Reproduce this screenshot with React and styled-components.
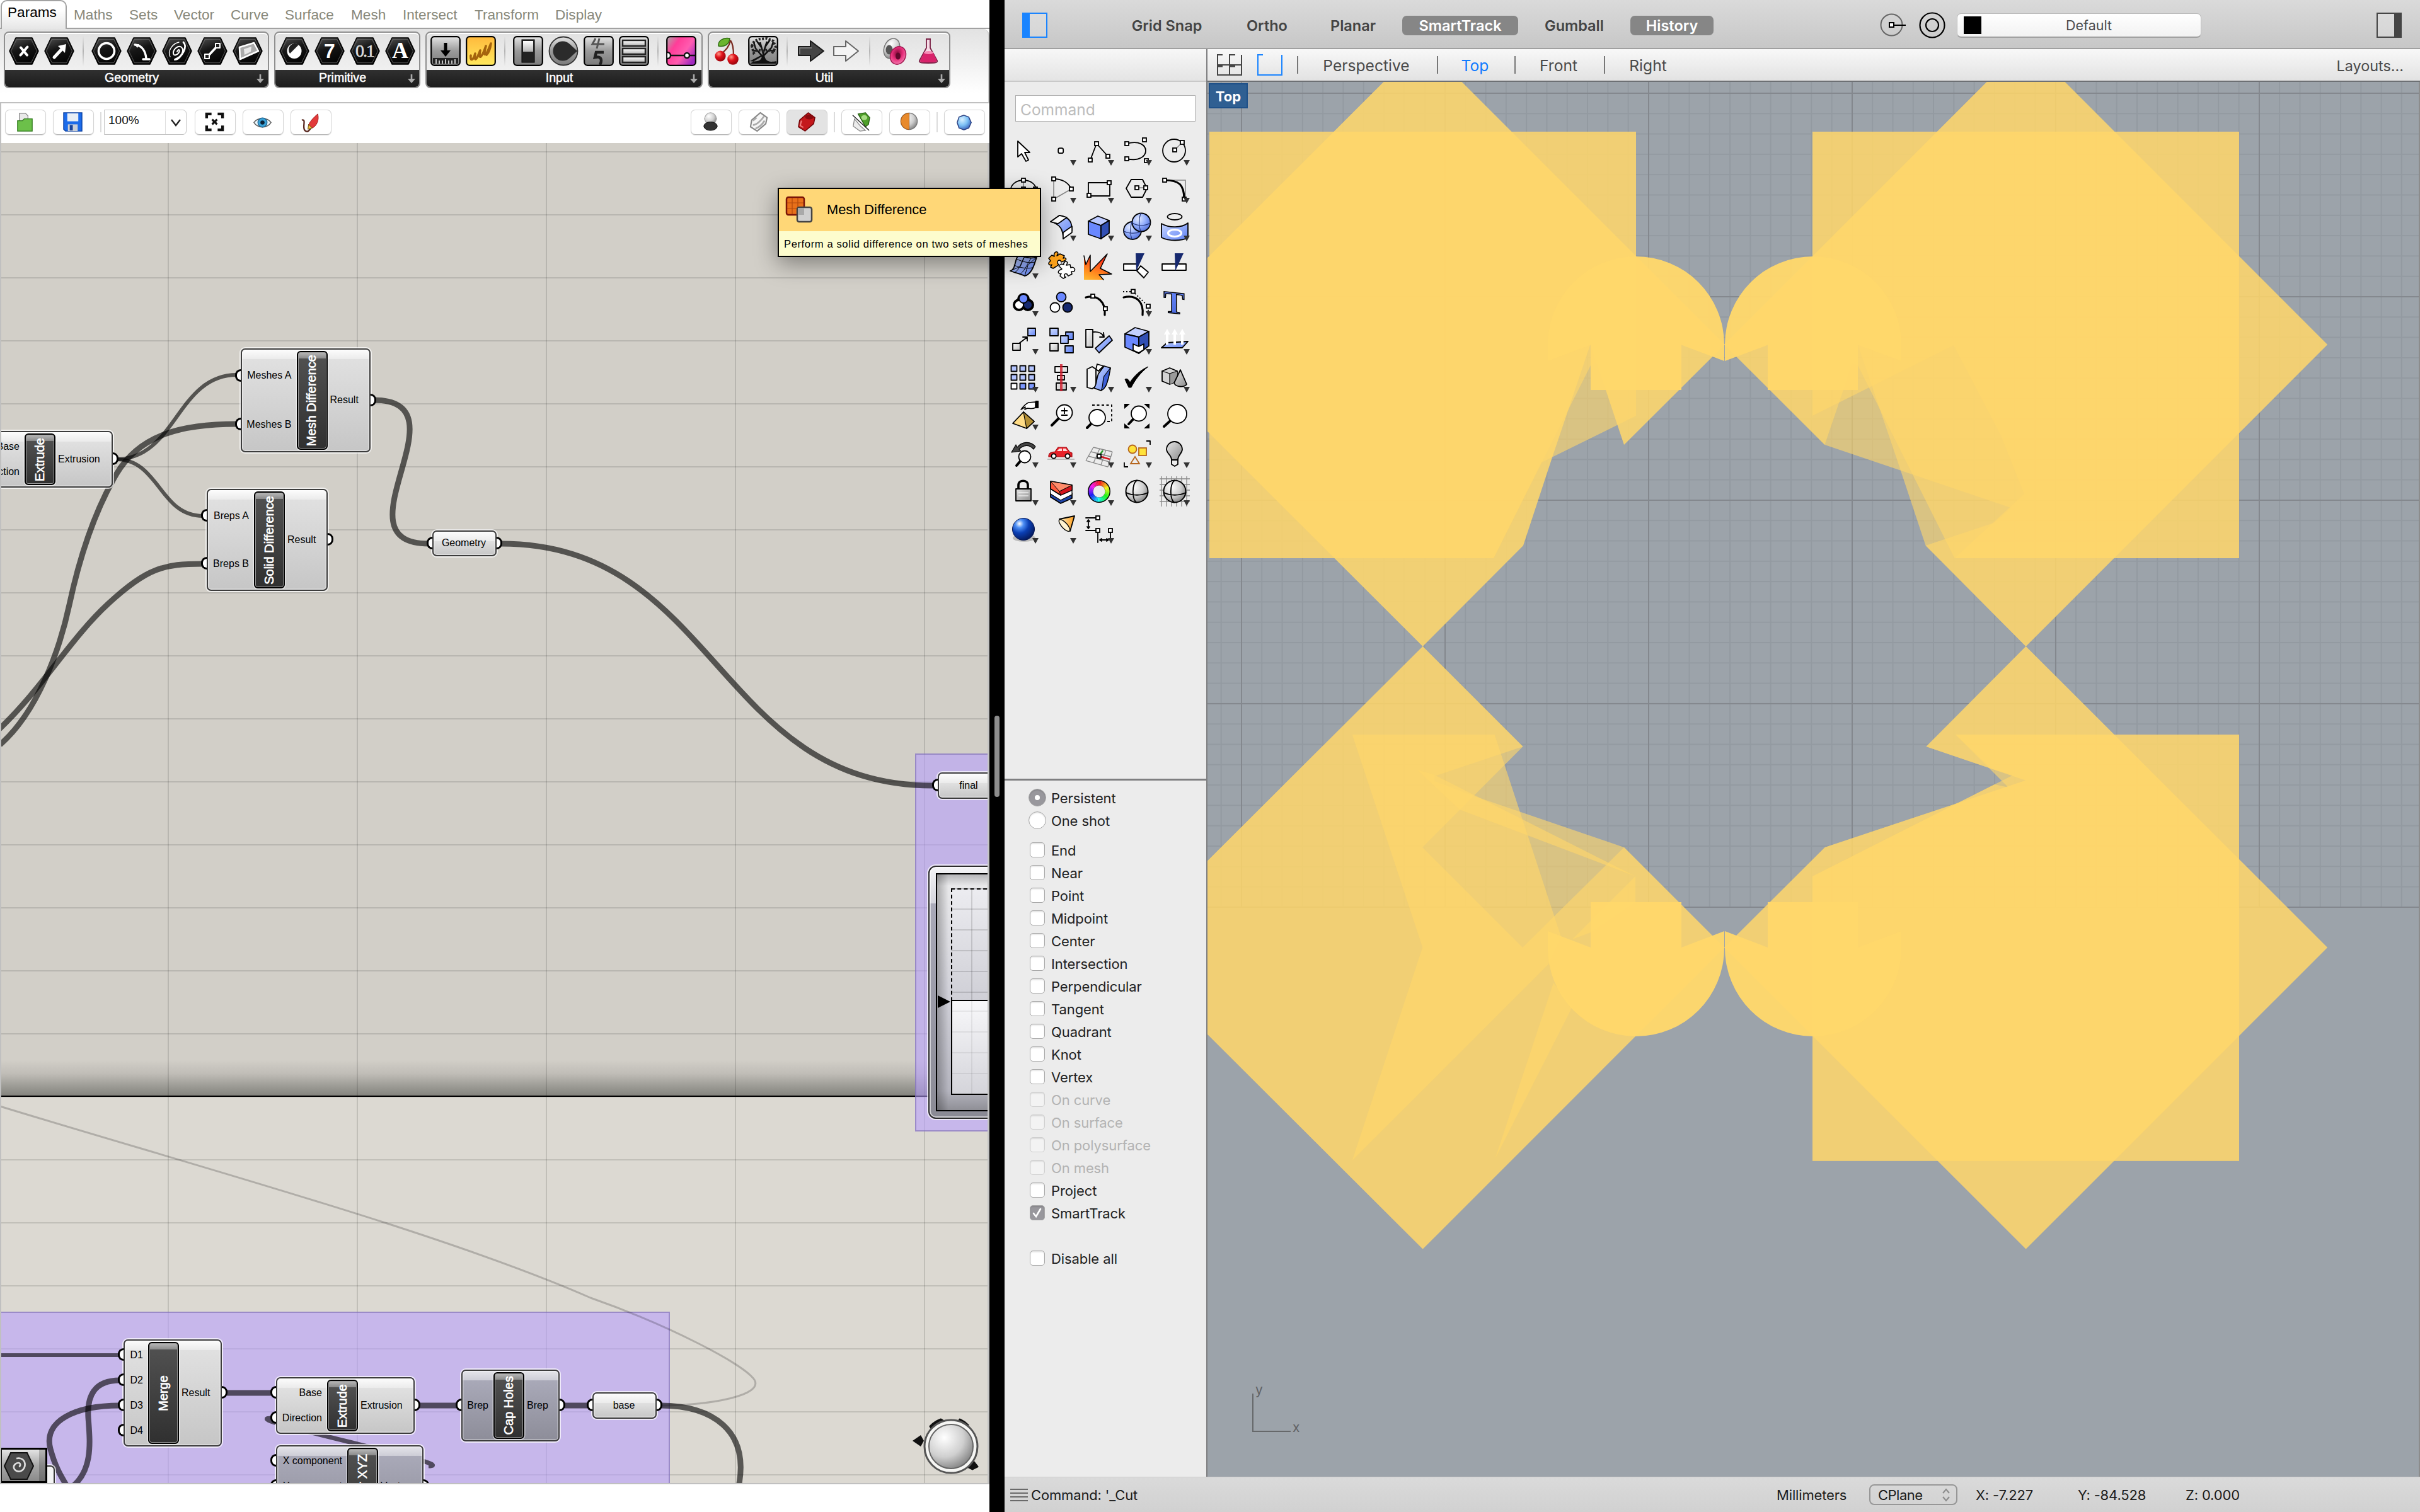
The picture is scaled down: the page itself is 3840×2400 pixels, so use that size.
import React from "react";
import styled, { createGlobalStyle, css } from "styled-components";

const Global = createGlobalStyle`
  html, body { margin: 0; padding: 0; background: #000; }
  *, *::before, *::after { box-sizing: border-box; }
`;

const arial = `"Liberation Sans", Arial, sans-serif`;
const inter = `Inter, Roboto, sans-serif`;

const Screen = styled.div`
  position: relative;
  display: flex;
  width: 3840px;
  height: 2400px;
  overflow: hidden;
  background: #000;
`;

/* ---------- shared gradients ---------- */

const HiddenSvg = styled.svg`
  position: absolute;
  width: 0;
  height: 0;
`;

const Lin = ({ id, stops, x2 = 0, y2 = 1 }) => (
  <linearGradient id={id} x1="0" y1="0" x2={x2} y2={y2}>
    {stops.map((c, i) => (
      <stop key={i} offset={i / (stops.length - 1)} stopColor={c} />
    ))}
  </linearGradient>
);

const Defs = () => (
  <HiddenSvg>
    <defs>
      <Lin id="hex" stops={["#555", "#161616", "#050505"]} x2={0.4} />
      <Lin id="box" stops={["#e4e4e4", "#9a9a9a", "#7c7c7c"]} />
      <Lin id="boxLight" stops={["#ffffff", "#b4b4b4"]} />
      <Lin id="gold" stops={["#ffb93c", "#ffe95e"]} />
      <Lin id="pink" stops={["#a9a9a9", "#ff3d98", "#ff5cb0", "#a02bc0"]} x2={1} y2={0.7} />
      <Lin id="blue" stops={["#c7d6ff", "#5f82f5"]} x2={1} y2={1} />
      <Lin id="blueDark" stops={["#6c8cff", "#4564d8"]} />
      <Lin id="grey" stops={["#ffffff", "#bdbdbd"]} x2={1} />
      <Lin id="greyDark" stops={["#e6e6e6", "#8c8c8c"]} x2={1} />
      <Lin id="fire" stops={["#ff3a1a", "#ff8a1f", "#ffce3a"]} x2={-0.4} />
      <Lin id="orange" stops={["#fff3c8", "#ff9d1a"]} x2={1} y2={0} />
      <radialGradient id="ball" cx=".35" cy=".3" r=".8">
        <stop offset="0" stopColor="#fff" />
        <stop offset=".55" stopColor="#cfcfcf" />
        <stop offset="1" stopColor="#777" />
      </radialGradient>
      <radialGradient id="ballBlue" cx=".35" cy=".3" r=".8">
        <stop offset="0" stopColor="#e3ebff" />
        <stop offset=".5" stopColor="#93aefc" />
        <stop offset="1" stopColor="#4a68d8" />
      </radialGradient>
      <radialGradient id="render" cx=".32" cy=".25" r=".85">
        <stop offset="0" stopColor="#fff" />
        <stop offset=".22" stopColor="#4d8ff5" />
        <stop offset=".5" stopColor="#0b3fb4" />
        <stop offset="1" stopColor="#04134d" />
      </radialGradient>
      <radialGradient id="cherry" cx=".35" cy=".3" r=".8">
        <stop offset="0" stopColor="#ff9a8a" />
        <stop offset=".4" stopColor="#e0141c" />
        <stop offset="1" stopColor="#8a0008" />
      </radialGradient>
      <radialGradient id="pinkBall" cx=".4" cy=".4" r=".7">
        <stop offset="0" stopColor="#8c0a3c" />
        <stop offset=".5" stopColor="#e8307c" />
        <stop offset="1" stopColor="#f58ab8" />
      </radialGradient>
      <radialGradient id="sky" cx=".35" cy=".3" r=".8">
        <stop offset="0" stopColor="#d8f0ff" />
        <stop offset=".5" stopColor="#7cc0f5" />
        <stop offset="1" stopColor="#2c4fae" />
      </radialGradient>
    </defs>
  </HiddenSvg>
);

/* ---------- left window: ribbon ---------- */

const ScriptWindow = styled.section`
  display: flex;
  flex-direction: column;
  width: 1570px;
  height: 2400px;
  background: #fff;
  font-family: ${arial};
  overflow: hidden;
`;

const TabRow = styled.nav`
  display: flex;
  align-items: flex-end;
  height: 46px;
  padding-left: 1px;
  border-bottom: 2px solid #a2a2a2;
`;

const Tab = styled.div`
  width: ${(p) => p.$w}px;
  height: 44px;
  padding-top: 10px;
  font-size: 22.6px;
  line-height: 28px;
  white-space: nowrap;
  color: #88887a;
  ${(p) =>
    p.$active &&
    css`
      height: 46px;
      margin: 0 11px -2px 0;
      padding: 4px 0 0 9px;
      color: #000;
      background: linear-gradient(#fff 30%, #e6e6e6);
      border: 2px solid #a2a2a2;
      border-bottom: none;
      border-radius: 10px 10px 0 0;
    `}
`;

const Ribbon = styled.div`
  display: flex;
  gap: 8px;
  height: 118px;
  padding: 4px 0 0 6px;
  background: linear-gradient(#e2e2e2, #fff 88%);
  border-right: 2px solid #cfcfcf;
  border-bottom: 2px solid #c0c0c0;
  border-top-right-radius: 10px;
`;

const Group = styled.div`
  display: flex;
  flex-direction: column;
  width: ${(p) => p.$w}px;
  height: 90px;
  border: 2px solid #8f8f8f;
  border-radius: 8px;
  overflow: hidden;
  background: linear-gradient(#e2e2e2, #f6f6f6);
  box-shadow: inset 0 2px 0 #fff;
`;

const GroupIcons = styled.div`
  display: flex;
  flex: 1;
  align-items: center;
  gap: 8px;
  padding: 0 0 1px 6px;
`;

const GroupLabel = styled.div`
  display: flex;
  align-items: center;
  height: 27px;
  padding-bottom: 3px;
  background: linear-gradient(#303030, #1c1c1c);
  color: #fff;
  font-size: 19.6px;
  line-height: 24px;
  -webkit-text-stroke: 0.5px #fff;
  span { flex: 1; text-align: center; padding-left: 4px; }
`;

const RibbonIcon = styled.svg`
  width: 48px;
  height: 48px;
  flex: none;
`;

const RibbonSep = styled.div`
  width: 11px;
  height: 48px;
  flex: none;
  background: linear-gradient(#0000, #b4b4b4 50%, #0000) center / 2px 100% no-repeat;
`;

const More = styled.svg`
  width: 14px;
  height: 16px;
  margin: 3px 5px 0 0;
`;

const Hex = ({ children }) => (
  <RibbonIcon viewBox="0 0 48 48">
    <path d="M1 24 11 3H37L47 24 37 45H11Z" fill="url(#hex)" stroke="#000" strokeWidth="1.5" strokeLinejoin="round" />
    <path d="M3.5 24 12.5 5.3H35.5L44.5 24 35.5 42.7H12.5Z" fill="none" stroke="#777" strokeWidth="1" opacity=".7" />
    {children}
  </RibbonIcon>
);

const Boxed = ({ fill = "url(#box)", children }) => (
  <RibbonIcon viewBox="0 0 48 48">
    <rect x="1.2" y="1.2" width="45.6" height="45.6" rx="5" fill={fill} stroke="#000" strokeWidth="2.2" />
    {children}
  </RibbonIcon>
);

const wl = { fill: "none", stroke: "#fff", strokeLinecap: "round", strokeLinejoin: "round" };

const geometryIcons = [
  <Hex key="pt"><path d="M19 18.500 29 30.500M29.500 17.500 18.500 30.500" {...wl} strokeWidth="4" /></Hex>,
  <Hex key="vec"><path d="M16 34 29 20" {...wl} strokeWidth="5" /><path d="M22 16 35 13 33 27Z" fill="#fff" /></Hex>,
  null,
  <Hex key="circ"><circle cx="24" cy="24" r="12.5" {...wl} strokeWidth="3.6" /></Hex>,
  <Hex key="arc"><path d="M13 14C25 15 30 25 31 36M26 37H36" {...wl} strokeWidth="3.4" /><path d="M12 13 20 13 17 19Z" fill="#fff" /></Hex>,
  <Hex key="spi"><path d="M24 25c2-5 5-3 3 1s-9 7-9 1 8-13 13-9-1 20-11 20" {...wl} strokeWidth="2" /><path d="M34 10c7 7-2 24-13 27" {...wl} strokeWidth="2.8" /><path d="M13 33C8 24 17 12 27 10" {...wl} strokeWidth="1.4" /></Hex>,
  <Hex key="line"><path d="M17 32 31 17" {...wl} strokeWidth="3.6" /><rect x="12" y="29" width="7" height="7" {...wl} fill="#222" strokeWidth="2" /><rect x="29" y="12" width="7" height="7" {...wl} fill="#222" strokeWidth="2" /></Hex>,
  <Hex key="srf"><path d="M11 18 34 11 41 24 12 37Z" fill="#aaa" stroke="#fff" strokeWidth="2.6" strokeLinejoin="round" /><path d="M18 21 30 17 29 25 19 30Z" fill="#e8e8e8" /></Hex>,
];

const primitiveIcons = [
  <Hex key="bool"><ellipse cx="24" cy="24" rx="11.500" ry="12" fill="#fff" /><path d="M17 28A10 10 0 0 1 31 14Z" fill="#222" /></Hex>,
  <Hex key="int"><text x="24" y="35" fontSize="32" fontFamily="Liberation Sans" fill="#fff" textAnchor="middle" fontWeight="700">7</text></Hex>,
  <Hex key="num"><text x="23.500" y="33" fontSize="28" fontFamily="Liberation Serif" fill="#ddd" textAnchor="middle" letterSpacing="-2" stroke="#ddd" strokeWidth=".6">0.1</text></Hex>,
  <Hex key="txt"><text x="24" y="34.5" fontSize="36" fontFamily="Liberation Serif" fill="#fff" textAnchor="middle" fontWeight="700">A</text></Hex>,
];

const inputIcons = [
  <Boxed key="dl"><path d="M24 11V26" stroke="#000" strokeWidth="5" /><path d="M16 23H32L24 33Z" fill="#000" /><rect x="4" y="35" width="40" height="9" fill="#222" /><path d="M9 37v7M14 39v5M19 39v5M24 37v7M29 39v5M34 39v5M39 37v7" stroke="#eee" strokeWidth="1.6" /></Boxed>,
  <Boxed key="gm" fill="url(#gold)"><path d="M8 31C7 41 12 39 15 28C13 42 17 39 23 23C20 39 25 36 32 16C27 34 31 35 40 12C38 26 34 29 33 30" fill="none" stroke="#a5630d" strokeWidth="3.6" strokeLinecap="round" strokeLinejoin="round" /></Boxed>,
  null,
  <Boxed key="sl"><rect x="14" y="6" width="20" height="36" fill="#222" stroke="#000" /><rect x="16" y="8" width="16" height="17" fill="url(#boxLight)" /></Boxed>,
  <RibbonIcon key="kn" viewBox="0 0 48 48"><circle cx="24" cy="24" r="22.5" fill="url(#box)" stroke="#333" strokeWidth="1.8" /><circle cx="23" cy="24" r="15.5" fill="#2b2b2b" /><path d="M34 13 46 24 34 35Z" fill="#2b2b2b" /></RibbonIcon>,
  <Boxed key="ds"><path d="M19 4 14 13H33M25 4 21 20" fill="none" stroke="#555" strokeWidth="3" /><path d="M32 26H20L18 34C26 32 31 36 26 46" fill="none" stroke="#222" strokeWidth="4.5" /></Boxed>,
  <Boxed key="vl">{[7, 20, 33].map((y) => <rect key={y} x="6" y={y} width="36" height="9" fill="url(#boxLight)" stroke="#222" strokeWidth="2.4" />)}</Boxed>,
  null,
  <Boxed key="pk" fill="url(#pink)"><path d="M2 31H46" stroke="#111" strokeWidth="2.4" /><circle cx="33" cy="31" r="4" fill="#fff" stroke="#111" strokeWidth="2.4" /><path d="M2 26a5 5 0 0 1 0 10" fill="#fff" stroke="#111" strokeWidth="2.4" /></Boxed>,
];

const utilIcons = [
  <RibbonIcon key="ch" viewBox="0 0 48 48"><path d="M28 7C26 18 20 24 12 29M28 7C33 14 33 24 33 31" fill="none" stroke="#7a2a20" strokeWidth="2.2" /><path d="M9 16C8 8 16 2 27 4C26 14 18 18 9 16Z" fill="#6ab52e" stroke="#2f6d12" strokeWidth="1.5" /><circle cx="12" cy="32" r="8.6" fill="url(#cherry)" /><circle cx="32" cy="37" r="8.8" fill="url(#cherry)" /></RibbonIcon>,
  <Boxed key="tr" fill="url(#box)"><path d="M3 44H45V40C30 43 27 38 26 30M22 30C22 38 18 42 3 40Z" fill="#111" /><path d="M24 44V27M24 34 12 20M24 32 37 19M24 28 19 10M24 28 30 9M15 24 6 23M33 23 43 24M12 20 9 10M37 19 40 9M21 18 13 7M28 16 35 6" stroke="#111" strokeWidth="2.6" fill="none" /><path d="M6 16 10 8 19 5 30 4 40 8 44 18 39 26 32 22 24 24 15 22 9 27Z" fill="none" stroke="#222" strokeWidth="4" strokeDasharray="3 2.4" /></Boxed>,
  null,
  <RibbonIcon key="a1" viewBox="0 0 48 48"><path d="M5 17H24V8L45 24 24 40V31H5Z" fill="#444" stroke="#1a1a1a" strokeWidth="2" strokeLinejoin="round" /><path d="M7 29V19H26" fill="none" stroke="#888" strokeWidth="1.4" /></RibbonIcon>,
  <RibbonIcon key="a2" viewBox="0 0 48 48"><path d="M5 17H24V8L44 24 24 40V31H5Z" fill="#f4f4f4" stroke="#666" strokeWidth="2" strokeLinejoin="round" /></RibbonIcon>,
  null,
  <RibbonIcon key="eg" viewBox="0 0 48 48"><ellipse cx="22" cy="20" rx="12" ry="16.500" transform="rotate(22 22 20)" fill="url(#ball)" stroke="#777" strokeWidth="1.5" /><ellipse cx="18" cy="22" rx="5.500" ry="7.500" fill="#555" /><ellipse cx="32" cy="31" rx="12" ry="14.500" transform="rotate(25 32 31)" fill="url(#pinkBall)" stroke="#a01850" strokeWidth="1.5" /><ellipse cx="32" cy="32" rx="4" ry="5.500" fill="#60082c" /></RibbonIcon>,
  <RibbonIcon key="fl" viewBox="0 0 48 48"><path d="M20 5H28M21 5V19L10 39C9 42 11 43 24 43S39 42 38 39L27 19V5" fill="#f6dbe6" stroke="#7a2146" strokeWidth="1.8" /><path d="M17 27H32L37.5 39C37 42 34 42 24 42S10 42 11 39Z" fill="#d8236b" /><ellipse cx="24.5" cy="26.5" rx="7.5" ry="2.4" fill="#f58bb5" /></RibbonIcon>,
];

const RibbonGroup = ({ w, label, icons }) => (
  <Group $w={w}>
    <GroupIcons>{icons.map((ic, i) => ic || <RibbonSep key={i} />)}</GroupIcons>
    <GroupLabel>
      <span>{label}</span>
      <More viewBox="0 0 14 16"><path d="M7 1V10" stroke="#aaa" strokeWidth="2.6" /><path d="M1 8H13L7 15Z" fill="#aaa" /></More>
    </GroupLabel>
  </Group>
);

/* ---------- left window: canvas toolbar ---------- */

const ToolRow = styled.div`
  display: flex;
  align-items: center;
  height: 63px;
  padding: 0 7px 3px 6px;
  background: #fff;
  border-left: 2px solid #c0c0c0;
`;

const ToolButton = styled.button`
  display: flex;
  align-items: center;
  justify-content: center;
  width: 65px;
  height: 40px;
  flex: none;
  margin: 0 ${(p) => (p.$last ? 0 : 11)}px 0 0;
  padding: 0 2px 2px 0;
  border: 1.5px solid #d4d4d4;
  border-bottom-color: #b8b8b8;
  border-radius: 7px;
  box-shadow: 0 1px 1px #0002;
  background: ${(p) => (p.$on ? "#e3e3e3" : "#fff")};
  svg { width: 33px; height: 33px; }
`;

const ToolSep = styled.div`
  width: 2px;
  height: 32px;
  flex: none;
  margin: 0 ${(p) => p.$r}px 0 -1px;
  background: #dcdcdc;
`;

const Zoom = styled.div`
  display: flex;
  align-items: center;
  width: 131px;
  height: 40px;
  margin-right: 13px;
  border: 1.5px solid #c4c4c4;
  border-radius: 0 6px 6px 0;
  font-size: 19px;
  color: #111;
  span { width: 97px; height: 37px; padding: 2px 0 0 6px; line-height: 26px; border-right: 1.5px solid #dedede; }
  svg { width: 18px; height: 14px; margin-left: 7px; margin-top: 2px; }
`;

const Spacer = styled.div`
  flex: 1;
`;

/* ---------- left window: node canvas ---------- */

const TOP = 227;

const Canvas = styled.div`
  position: relative;
  height: 2129px;
  overflow: hidden;
  border-left: 2px solid #c0c0c0;
  border-right: 3px solid #c4c4c4;
  border-bottom: 2px solid #c0c0c0;
  background:
    linear-gradient(90deg, #0000001f 2px, #0000 2px) 264px 0 / 300px 100px,
    linear-gradient(#0000001f 2px, #0000 2px) 0 13px / 300px 100px,
    linear-gradient(#d2cfc8 1455px, #c0bdb7 1477px, #9b9a94 1498px, #84847e 1512px, #000 1512px, #000 1514px, #dcd9d2 1514px);
`;

const Wires = styled.svg`
  position: absolute;
  left: -2px;
  top: 0;
  width: 1570px;
  height: 2128px;
`;

const Cluster = styled.div`
  position: absolute;
  left: ${(p) => p.$x - 2}px;
  top: ${(p) => p.$y - TOP}px;
  width: ${(p) => p.$w}px;
  height: ${(p) => p.$h}px;
  background: rgba(181, 157, 255, 0.56);
  border: 2px solid #6a5ca07a;
`;

const nodeFill = (p) =>
  p.$dark
    ? "linear-gradient(#e4e4ea, #cdcdd6 15px, #a9a9b8 15px, #8d8d99)"
    : "linear-gradient(#fcfcfc, #ebebeb 15px, #e0e0e0 15px, #c6c6c6)";

const NodeBox = styled.div`
  position: absolute;
  left: ${(p) => p.$x - 2}px;
  top: ${(p) => p.$y - TOP}px;
  width: ${(p) => p.$w}px;
  height: ${(p) => p.$h}px;
  display: flex;
  padding: 3px 0;
  border: 2px solid #3c3c3c;
  border-radius: 7px;
  background: ${nodeFill};
  box-shadow: 0 0 0 2px #ffffffb0, inset 0 0 0 1.5px #ffffff70;
  font-size: 16px;
  color: #000;
`;

const Ports = styled.div`
  display: flex;
  flex-direction: column;
  width: ${(p) => p.$w}px;
  flex: none;
`;

const Port = styled.div`
  position: relative;
  display: flex;
  flex: 1;
  align-items: center;
  justify-content: ${(p) => (p.$out ? "flex-start" : "flex-end")};
  padding: ${(p) => (p.$out ? "0 0 1px 4px" : "0 8px 1px 0")};
  white-space: nowrap;
  line-height: 18px;
  &::after {
    content: "";
    position: absolute;
    top: calc(50% - 11px);
    ${(p) => (p.$out ? "right: -11px" : "left: -11px")};
    width: 9px;
    height: 20px;
    background: #fff;
    border: 3px solid #000;
    ${(p) =>
      p.$out
        ? "border-left: none; border-radius: 0 10px 10px 0;"
        : "border-right: none; border-radius: 10px 0 0 10px;"}
  }
`;

const Capsule = styled.div`
  display: flex;
  align-items: center;
  justify-content: center;
  width: 49px;
  flex: none;
  margin: -1px 0;
  padding-right: 2px;
  border: 2px solid #000;
  border-radius: 6px;
  background: linear-gradient(#b9b9b9, #8a8a8a 10px, #505050 10px, #303030);
  box-shadow: inset 0 0 0 1px #9a9a9a, 0 0 0 1.5px #ffffff80;
  color: #fff;
  font-size: 20px;
  -webkit-text-stroke: 0.6px #fff;
  white-space: nowrap;
  span { writing-mode: vertical-rl; transform: rotate(180deg); line-height: 24px; }
`;

const Component = ({ x, y, w, h, dark, ins, name, outs, inW }) => (
  <NodeBox $x={x} $y={y} $w={w} $h={h} $dark={dark}>
    <Ports $w={inW}>{ins.map((t) => <Port key={t}>{t}</Port>)}</Ports>
    <Capsule><span>{name}</span></Capsule>
    <Ports $w={w - 4 - 49 - inW}>{outs.map((t) => <Port key={t} $out>{t}</Port>)}</Ports>
  </NodeBox>
);

const ParamBox = styled(NodeBox)`
  align-items: stretch;
  padding: 0;
`;
const ParamPort = styled(Port)`
  flex: 0 0 0;
  padding: 0;
`;
const ParamName = styled.div`
  flex: 1;
  display: flex;
  align-items: center;
  justify-content: center;
  padding: 0 2px 1px 0;
`;

const Param = ({ x, y, w, h, name }) => (
  <ParamBox $x={x} $y={y} $w={w} $h={h}>
    <ParamPort />
    <ParamName>{name}</ParamName>
    <ParamPort $out />
  </ParamBox>
);

const SliderFrame = styled.div`
  position: absolute;
  left: 1471px;
  top: ${1374 - TOP}px;
  width: 240px;
  height: 402px;
  padding: 10px;
  border: 2px solid #2c2c2c;
  border-radius: 12px;
  background: linear-gradient(#f4f4f6, #d4d4dc 58px, #a9a9b8 58px, #8a8a94);
  box-shadow: 0 0 0 2px #ffffffb0, inset 0 0 0 2px #ffffff90;
`;
const SliderWell = styled.div`
  height: 378px;
  border: 2px solid #000;
  padding: 22px 0 0 22px;
  background: linear-gradient(90deg, #0004, #0000 18px), linear-gradient(#b5b5b8, #e8e8ea 18px, #d0d0d8 50%, #b4b4be 92%, #8f8f96);
`;
const SliderPlot = styled.div`
  height: 179px;
  border: 2px dashed #000;
  border-bottom: 2px solid #000;
  background:
    linear-gradient(90deg, #0002 2px, #0000 2px) 30px 0 / 400px 100%,
    linear-gradient(#0002 2px, #0000 2px) 0 30px / 100% 33px,
    linear-gradient(#ececf0, #cfcfd6);
`;
const SliderValue = styled.div`
  height: 149px;
  border: 2px solid #000;
  border-top: none;
  background:
    linear-gradient(90deg, #0001 2px, #0000 2px) 30px 0 / 400px 100%,
    linear-gradient(#0001 2px, #0000 2px) 0 15px / 100% 33px,
    linear-gradient(#f8f8fa, #d4d4da);
`;
const SliderMark = styled.div`
  position: absolute;
  left: 13px;
  top: 204px;
  border: 10px solid transparent;
  border-left: 20px solid #000;
  border-right: none;
`;

const SpiralBox = styled.div`
  position: absolute;
  left: -2px;
  top: ${2298 - TOP}px;
  width: 75px;
  height: 56px;
  padding: 2px 3px;
  border: 3px solid #000;
  background: linear-gradient(90deg, #0000 59px, #0003 59px), linear-gradient(#e4e4e4, #a8a8a8 50%, #8a8a8a);
`;
const SpiralTail = styled.div`
  position: absolute;
  left: 40px;
  top: ${2326 - TOP}px;
  width: 45px;
  height: 60px;
  border: 2px solid #333;
  border-radius: 7px;
  background: #f4f4f4;
  box-shadow: 0 0 0 2px #fffa;
`;

const Compass = styled.svg`
  position: absolute;
  left: 1437px;
  top: ${2240 - TOP}px;
  width: 120px;
  height: 110px;
`;

const wire = { fill: "none", stroke: "#000", strokeOpacity: 0.6 };

const CanvasWires = () => (
  <Wires viewBox={`0 ${TOP} 1570 2128`}>
    <path d="M0 1756C300 1848 700 1956 937 2060C1060 2103 1180 2165 1197 2190C1212 2215 1130 2230 1050 2231" fill="none" stroke="#000" strokeOpacity=".2" strokeWidth="3" />
    <g {...wire} strokeWidth="6">
      <path d="M184 729C280 729 280 595 376 595" />
      <path d="M184 729C253 729 253 819 322 819" />
      <path d="M0 2151H190" />
      <path d="M680 2327C740 2327 370 2251 430 2251" strokeWidth="7" />
    </g>
    <g {...wire} strokeWidth="9">
      <path d="M0 1182C60 1130 95 1030 110 960S148 815 185 752S290 673 376 673" />
      <path d="M-4 1160C70 1090 110 1015 172 958S260 895 322 895" />
      <path d="M593 635C745 635 528 863 680 863" />
      <path d="M795 863C1137 863 1137 1247 1480 1247" />
      <path d="M190 2191C150 2191 138 2215 140 2250C143 2290 148 2335 112 2362" />
      <path d="M190 2231C120 2231 68 2255 80 2300C88 2330 98 2345 108 2362" />
      <path d="M360 2211H432M665 2231H726M896 2231H934" />
      <path d="M1048 2231C1130 2231 1190 2270 1172 2360" />
    </g>
  </Wires>
);

/* ---------- tooltip ---------- */

const Tooltip = styled.aside`
  position: absolute;
  left: 1234px;
  top: 298px;
  width: 418px;
  height: 110px;
  border: 2px solid #000;
  background: #fdfccd;
  box-shadow: 0 10px 36px #0006;
  font-family: ${arial};
  color: #000;
`;
const TipHead = styled.header`
  display: flex;
  align-items: center;
  gap: 22px;
  height: 67px;
  padding: 0 0 2px 10px;
  background: #ffd777;
  font-size: 21.8px;
  svg { width: 44px; height: 44px; }
`;
const TipBody = styled.p`
  margin: 0;
  padding: 9px 0 0 8px;
  font-size: 16.6px;
  line-height: 24px;
  letter-spacing: 0.6px;
  white-space: nowrap;
`;

/* ---------- window divider ---------- */

const Divider = styled.div`
  display: flex;
  justify-content: center;
  width: 24px;
  height: 2400px;
  padding: 1136px 0 0 0;
  background: #000;
`;
const DividerGrip = styled.div`
  width: 8px;
  height: 129px;
  border-radius: 4px;
  background: #8c8c8c;
`;

/* ---------- right window ---------- */

const ModelWindow = styled.section`
  display: flex;
  flex-direction: column;
  width: 2246px;
  height: 2400px;
  font-family: ${inter};
  background: #ececec;
`;

const TitleBar = styled.header`
  display: flex;
  align-items: center;
  height: 78px;
  padding: 4px 29px 0 28px;
  background: linear-gradient(#dadada, #c7c7c7);
  border-bottom: 2px solid #a0a0a0;
`;

const PanelToggle = styled.div`
  width: 40px;
  height: 40px;
  flex: none;
  border: 2.5px solid ${(p) => p.$c};
  ${(p) => (p.$side === "left" ? "border-left-width: 12px" : "border-right-width: 12px")};
  background: #ffffff30;
`;

const Modes = styled.div`
  display: flex;
  gap: 19px;
  margin-left: 108px;
`;
const Mode = styled.div`
  display: flex;
  align-items: center;
  justify-content: center;
  width: ${(p) => p.$w}px;
  height: 31px;
  padding-top: 1px;
  border-radius: 7px;
  font-size: 23.5px;
  font-weight: 600;
  color: ${(p) => (p.$on ? "#fff" : "#444")};
  background: ${(p) => (p.$on ? "#868686" : "transparent")};
`;

const SnapIcons = styled.svg`
  width: 110px;
  height: 50px;
  flex: none;
`;

const LayerSelect = styled.div`
  display: flex;
  align-items: center;
  width: 388px;
  height: 39px;
  margin: 0 278px 0 14px;
  padding-left: 10px;
  border: 1px solid #bbb;
  border-bottom: 2px solid #a0a0a0;
  border-radius: 7px;
  background: linear-gradient(#fff, #f2f2f2);
  font-size: 21.5px;
  color: #4c4c4c;
  span { flex: 1; text-align: center; padding: 1px 7px 0 0; }
`;
const Swatch = styled.i`
  width: 28px;
  height: 28px;
  background: #000;
`;

const Body = styled.div`
  display: flex;
  height: 2266px;
`;

const Sidebar = styled.aside`
  display: flex;
  flex-direction: column;
  width: 322px;
  flex: none;
  border-right: 2px solid #7e7e80;
  background: #ececec;
`;
const SideHead = styled.div`
  height: 52px;
  flex: none;
  background: linear-gradient(#f7f7f7, #e4e4e4);
  border-bottom: 2px solid #c9c9c9;
`;
const CommandInput = styled.div`
  width: 286px;
  height: 42px;
  flex: none;
  margin: 21px 0 16px 17px;
  padding-left: 7px;
  border: 1.5px solid #adadad;
  background: #fff;
  font-size: 24.5px;
  line-height: 45px;
  color: #bcbcbc;
`;
const Palette = styled.div`
  display: grid;
  grid-template-columns: repeat(5, 60px);
  grid-auto-rows: 60px;
  height: 1027px;
  flex: none;
  margin-left: -1px;
`;
const PaletteCell = styled.div`
  position: relative;
  svg { width: 60px; height: 60px; display: block; overflow: visible; }
  ${(p) =>
    p.$menu &&
    css`
      &::after {
        content: "";
        position: absolute;
        left: 44.5px;
        top: 45px;
        border: 5px solid transparent;
        border-top: 9px solid #333;
        border-bottom: none;
      }
    `}
`;

const Snaps = styled.div`
  display: flex;
  flex-direction: column;
  border-top: 3px solid #7e7e80;
  padding-top: 9px;
`;
const SnapRow = styled.label`
  display: flex;
  align-items: center;
  height: 36px;
  margin-top: ${(p) => p.$gap || 0}px;
  padding-left: 37px;
  font-size: 22px;
  letter-spacing: -0.1px;
  color: ${(p) => (p.$off ? "#b3b3b3" : "#222")};
`;
const SnapName = styled.span`
  padding-top: 1px;
`;
const Mark = styled.span`
  display: flex;
  align-items: center;
  justify-content: center;
  width: ${(p) => (p.$radio ? 28 : 24)}px;
  height: ${(p) => (p.$radio ? 28 : 24)}px;
  margin: 0 ${(p) => (p.$radio ? 8 : 10)}px 0 ${(p) => (p.$radio ? 1 : 3)}px;
  border-radius: ${(p) => (p.$radio ? "50%" : "5px")};
  border: 1px solid ${(p) => (p.$off ? "#cfcfcf" : "#a8a8a8")};
  background: ${(p) => (p.$on ? "#98979c" : p.$off ? "#f3f3f3" : "#fff")};
  box-shadow: inset 0 1.5px 2px #0002;
`;
const Dot = styled.i`
  width: 8px;
  height: 8px;
  border-radius: 50%;
  background: #fff;
`;

const Main = styled.div`
  display: flex;
  flex-direction: column;
  flex: 1;
`;
const ViewTabs = styled.nav`
  display: flex;
  align-items: center;
  height: 52px;
  padding: 0 26px 0 14px;
  background: linear-gradient(#f8f8f8, #e2e2e2);
  border-bottom: 2px solid #6d7074;
  font-size: 24.6px;
  color: #4a4a4a;
`;
const ViewIcon = styled.svg`
  width: 42px;
  height: 36px;
  margin-right: 22px;
`;
const ViewTab = styled.div`
  width: ${(p) => p.$w}px;
  height: 28px;
  padding-right: 4px;
  line-height: 30px;
  text-align: center;
  border-left: 2px solid #777;
  color: ${(p) => (p.$on ? "#0f7bff" : "inherit")};
`;
const Layouts = styled.div`
  margin-left: auto;
  padding-top: 3px;
  font-size: 23.4px;
`;

const Viewport = styled.div`
  position: relative;
  flex: 1;
  overflow: hidden;
  background: #9ca3aa;
  border-right: 2px solid #8c8c8c;
`;
const GridPlane = styled.div`
  height: 1311px;
  background:
    linear-gradient(90deg, #84888e 2px, #0000 2px) 53px 0 / 323px 100%,
    linear-gradient(#84888e 2px, #0000 2px) 0 17px / 100% 323px,
    linear-gradient(90deg, #939aa1 2px, #0000 2px) 53px 0 / 32.3px 100%,
    linear-gradient(#939aa1 2px, #0000 2px) 0 17px / 100% 32.3px;
`;
const Model = styled.svg`
  position: absolute;
  left: 0;
  top: 0;
  width: 1924px;
  height: 2214px;
`;
const ViewBadge = styled.div`
  position: absolute;
  left: 2px;
  top: 2px;
  width: 62px;
  height: 40px;
  border: 2px solid #1e5088;
  background: #2f5f92;
  color: #fff;
  font-size: 22px;
  font-weight: 700;
  line-height: 39px;
  text-align: center;
`;

const StatusBar = styled.footer`
  display: flex;
  align-items: center;
  height: 56px;
  padding-left: 9px;
  border-top: 1px solid #cecece;
  background: linear-gradient(#dadada, #d1d1d1);
  font-size: 22px;
  letter-spacing: -0.15px;
  color: #1c1c1c;
`;
const Lines = styled.svg`
  width: 28px;
  height: 20px;
  margin: 0 5px 0 0;
`;
const StatusItem = styled.div`
  width: ${(p) => p.$w}px;
  padding-top: 1px;
  white-space: nowrap;
  flex: none;
`;
const PlaneSelect = styled.div`
  display: flex;
  align-items: center;
  justify-content: space-between;
  width: 140px;
  height: 33px;
  margin-right: 29px;
  padding: 0 9px 0 12px;
  border: 2px solid #979797;
  border-radius: 8px;
  letter-spacing: -0.5px;
  svg { width: 14px; height: 22px; }
`;

/* ---------- palette drawings ---------- */

const k = { fill: "none", stroke: "#000", strokeWidth: 1.8, strokeLinejoin: "round", strokeLinecap: "round" };
const gl = { fill: "none", stroke: "#888", strokeWidth: 1.6 };
const H = ({ x, y, s = 6 }) => <rect x={x - s / 2} y={y - s / 2} width={s} height={s} fill="#fff" stroke="#000" strokeWidth="1.8" />;
const Lens = ({ x, y, r, hx, hy }) => (
  <>
    <path d={`M${x - r * 0.7} ${y + r * 0.7}L${hx} ${hy}`} stroke="#000" strokeWidth="4" strokeLinecap="round" />
    <circle cx={x} cy={y} r={r} fill="#fff" stroke="#000" strokeWidth="1.8" />
  </>
);
const Globe = () => (
  <>
    <circle cx="31" cy="31" r="17.5" fill="url(#ball)" stroke="#000" strokeWidth="2" />
    <path d="M31 13.500C23 19 23 42 30 48.500M14 33C24 38 38 38 48.500 33" {...k} />
  </>
);

const hues = Array.from({ length: 36 }, (_, i) => i * 10);

const palette = [
  ["cursor", 0, <path d="M22 15V40L28 35 35 47 39 45 33 33H41Z" {...k} fill="#fff" />],
  ["point", 1, <rect x="26.200" y="26.200" width="8" height="8" rx="2.500" {...k} fill="#fff" />],
  ["polyline", 1, <><path d="M17 45 27 19 45 39" {...k} /><H x={17} y={45} /><H x={27} y={19} /><H x={45} y={39} /></>],
  ["curve", 1, <><path d="M15 19C55 8 55 52 15 43" {...k} /><H x={15} y={19} /><H x={15} y={43} /><H x={43} y={13} /><H x={46} y={46} /></>],
  ["circle", 1, <><circle cx="30" cy="30" r="18" {...k} /><path d="M31 29 43 17" {...gl} /><H x={31} y={29} /><H x={43} y={17} /></>],

  ["ellipse", 1, <><ellipse cx="31" cy="32" rx="20" ry="15" {...k} /><path d="M31 32V17" {...gl} /><H x={31} y={17} /><H x={31} y={31} /><H x={50} y={31} /></>],
  ["arc", 1, <><path d="M19 15V47L47 31" {...gl} /><path d="M19 15C31 15 42 20 47 31" {...k} /><H x={19} y={15} /><H x={19} y={47} /><H x={47} y={31} /></>],
  ["rectangle", 1, <><path d="M14 21H48V42H14Z" {...k} /><H x={15} y={41} /><H x={47} y={21} /></>],
  ["polygon", 1, <><path d="M14 30 22 16H40L47 30 40 44H22Z" {...k} /><path d="M31 29H45" {...gl} /><H x={31} y={29} /><H x={45} y={29} /></>],
  ["fillet", 1, <><path d="M15 17H48V47" {...gl} /><path d="M15 17C38 17 46 24 46 47" {...k} strokeWidth="3.200" /><H x={15} y={17} /><H x={46} y={47} /></>],

  ["patch", 1, <path d="M12 24C24 14 38 14 50 22L44 44C34 36 22 38 14 46Z" {...k} fill="url(#blue)" />],
  ["blend", 1, <><path d="M14 23 28 13C45 16 48 24 48 37L34 50C34 36 30 27 14 23Z" {...k} fill="url(#blue)" /><path d="M14 23 28 13 40 16 26 26ZM34 40 48 30V40L34 50Z" {...k} fill="#fff" strokeWidth="1.600" /></>],
  ["box", 1, <><path d="M14 22 29 14 47 21 34 29Z" {...k} fill="#bccaff" /><path d="M14 22 34 29V50L14 43Z" {...k} fill="#6a88ff" /><path d="M34 29 47 21V41L34 50Z" {...k} fill="#314fb4" /></>],
  ["spheres", 1, <><circle cx="24" cy="37" r="14" {...k} fill="url(#ballBlue)" /><circle cx="38" cy="24" r="14.500" {...k} fill="url(#ballBlue)" /><path d="M37 9.500C34 18 34 31 37 38M24 25C32 30 44 30 52 25M23 23C20 33 20 42 23 51M10 38C18 42 30 42 36 39" {...k} strokeWidth="1.200" stroke="#23357a" /></>],
  ["surface", 1, <><ellipse cx="31" cy="15" rx="11.500" ry="5" {...k} fill="#eee" /><path d="M10 26C22 33 42 33 52 25V48C42 54 22 54 10 48Z" {...k} fill="url(#blue)" /><ellipse cx="31" cy="41" rx="10.500" ry="5.500" fill="none" stroke="#fff" strokeWidth="3.200" /></>],

  ["mesh", 1, <><path d="M10 41C20 38 16 22 24 15 34 20 44 22 52 19 48 32 44 46 33 49 26 46 18 44 10 41Z" {...k} fill="url(#blue)" /><path d="M16 32C26 36 36 38 45 36M20 22C30 27 40 29 49 27M18 43C26 38 28 24 33 18M26 46C34 40 38 28 43 21M10 41 26 34 33 18M33 49 38 32 52 19" {...k} strokeWidth="1" /></>],
  ["puzzle", 0, <><path d="M11 21 16 16 20 18C18 12 24 8 26 13L24 17 29 14 36 17 34 21C38 19 41 23 36 25L31 27 30 25C27 22 22 27 27 31L23 34 18 37 14 35 16 31C13 33 9 30 12 27L14 25Z" {...k} fill="#ffa41c" strokeWidth="1.500" /><path d="M27 33 31 30 35 31C34 27 39 24 41 28L39 32 45 31 46 36C50 34 55 38 51 42L47 42 48 46 42 49 40 46C36 44 34 49 38 51L34 53 29 49 31 45C28 47 24 43 28 40L32 38Z" {...k} fill="#fff" strokeWidth="1.500" /></>],
  ["explode", 0, <><path d="M7 17 10 31 17 16 17 42 44 14 33 37 51 46 31 47 38 55H7Z" fill="url(#fire)" /><path d="M7 17 10 31 17 16 17 42 44 14 33 37 51 46 31 47 38 55" {...k} strokeWidth="1.500" /></>],
  ["trim", 0, <><path d="M10 30H31V40H10ZM37 33 49 43 42 52 31 41Z" {...k} fill="#fff" /><path d="M29 13H43L30 41Z" fill="#16296f" /></>],
  ["split", 0, <><path d="M11 30H49V40H11Z" {...k} fill="#fff" /><path d="M31 13H45L32 41Z" fill="#16296f" /></>],

  ["group", 1, <><g stroke="#000" strokeWidth="8"><circle cx="31" cy="26" r="6" /><circle cx="24" cy="35" r="6" /><circle cx="38" cy="35" r="6" /></g><circle cx="24" cy="35" r="7" {...k} fill="#fff" /><circle cx="38" cy="35" r="7" {...k} fill="#16296f" /><circle cx="31" cy="25" r="7" {...k} fill="#6a88ff" /></>],
  ["ungroup", 0, <><circle cx="31" cy="22.500" r="7.500" {...k} fill="#6a88ff" /><circle cx="21" cy="39" r="7.500" {...k} fill="#fff" /><circle cx="41" cy="39" r="7.500" {...k} fill="#16296f" /></>],
  ["editpts", 0, <><path d="M10 23C28 18 42 30 40 51" {...k} strokeWidth="3.200" /><H x={21} y={21} /><H x={41} y={41} /></>],
  ["ctrlpts", 1, <><path d="M10 23C32 18 42 32 40 51" {...k} strokeWidth="3.200" /><path d="M9 14H25L49 37V50" {...k} strokeDasharray="2 3" strokeLinecap="butt" /><H x={25} y={13.500} /><H x={49} y={37} /></>],
  ["text", 0, <text x="30" y="48" fontSize="50" fontFamily="Liberation Serif" fontWeight="700" textAnchor="middle" fill="url(#blueDark)" stroke="#000" strokeWidth="1.500" transform="skewY(6) translate(0 -3)">T</text>],

  ["move", 1, <><path d="M14 36H26V47H14Z" {...k} fill="url(#grey)" /><path d="M38 12H50V24H38Z" {...k} fill="url(#blue)" /><path d="M24 36 36 27M30 26H37V32" {...k} /></>],
  ["copy", 0, <><path d="M13 12H26V24H13ZM38 18H50V30H38Z" {...k} fill="url(#blue)" /><path d="M30 24H42V36H30ZM37 40H50V51H37Z" {...k} fill="url(#blue)" /><path d="M13 36H26V48H13Z" {...k} fill="url(#grey)" /></>],
  ["rotate", 0, <><path d="M10 14H21V42H10Z" {...k} fill="url(#grey)" /><path d="M25 44 47 24 52 31 31 51Z" {...k} fill="url(#blue)" /><path d="M22 18C30 17 36 20 38 25M32 26 39 26 38 19" {...k} /></>],
  ["boolean", 1, <><path d="M12 21 28 11 50 17 34 26Z" {...k} fill="#c3d0ff" /><path d="M12 21 34 26V52L12 42Z" {...k} fill="#6a88ff" /><path d="M34 26 50 17V40L34 52Z" {...k} fill="#314fb4" /><path d="M25 37 34 41 42 37V46L34 51 25 47Z" {...k} fill="#fff" /></>],
  ["extrude", 1, <><path d="M10 43 19 35 52 33 43 43Z" {...k} fill="url(#blue)" />{[19, 31, 43].map((x) => <path key={x} d={`M${x - 2} 38V22H${x - 5}L${x} 13 ${x + 5} 22H${x + 2}V38Z`} fill="#fff" />)}</>],

  ["array", 1, <>{[16, 30, 44].map((y) => [16, 30, 44].map((x) => <rect key={`${x}${y}`} x={x - 4.500} y={y - 4.500} width="9" height="9" {...k} fill={y === 44 ? (x === 16 ? "#fff" : "#7c98ff") : "#b3c4ff"} />))}</>],
  ["align", 1, <><path d="M21 13H41V22H21ZM25 27H36V34H25ZM23 39H39V50H23Z" {...k} fill="url(#grey)" /><path d="M31 9V52" stroke="#d11a2a" strokeWidth="4" opacity=".8" /></>],
  ["shear", 1, <><path d="M12 17 20 13 26 17V44L20 48 12 46Z" {...k} fill="#f4f4f4" /><path d="M28 9 38 12 30 20 26 17Z" {...k} fill="#fff" /><path d="M30 24 39 12 49 15 46 30C43 40 42 47 34 51L23 47C28 40 26 33 30 24Z" {...k} fill="url(#blue)" /><path d="M39 28 49 15 46 30C43 40 42 47 34 51C38 44 36 36 39 28Z" {...k} fill="#3d5fd6" strokeWidth="1.200" /></>],
  ["check", 1, <path d="M12 33C16 31 18 34 20 38C27 27 37 18 49 13C37 22 28 34 22 46H18Z" fill="#000" stroke="#000" strokeWidth="1" />],
  ["solids", 1, <><path d="M11 20 23 15 35 20V36L23 41 11 36Z" {...k} fill="#d4d4d4" /><path d="M23 24 35 20V36L23 41Z" fill="#9a9a9a" /><path d="M11 20 23 24 35 20M23 24V41" {...k} strokeWidth="1.200" /><path d="M40 18 50 41C46 46 33 46 30 39Z" {...k} fill="url(#greyDark)" /></>],

  ["drag", 1, <><path d="M14 43 31 25 48 40 36 51Z" {...k} fill="#ffdc86" /><path d="M31 25 48 40 36 51Z" fill="#b48f34" stroke="#000" strokeWidth="1.200" /><path d="M27 21C31 16 34 12 39 10L50 9V18C45 21 41 19 37 19L33 21 34 17Z" {...k} fill="#fff" strokeWidth="1.500" /><path d="M50 7H55V19H50Z" fill="#000" /></>],
  ["zoomdyn", 0, <><Lens x={36} y={26} r={12.500} hx={16} hy={46} /><path d="M31 23H41M36 18V28M31 30H41" stroke="#000" strokeWidth="1.800" /></>],
  ["zoomwin", 0, <><path d="M20 14H51V40H38" {...k} strokeDasharray="4 3.500" strokeLinecap="butt" /><Lens x={28} y={34} r={13} hx={12} hy={50} /></>],
  ["zoomext", 0, <><path d="M11 12H20L11 20ZM51 12H42L51 20ZM11 51H20L11 43ZM51 51H42L51 43Z" fill="#000" /><Lens x={34} y={27.500} r={12} hx={18} hy={44} /></>],
  ["zoomsel", 0, <Lens x={35} y={28} r={15} hx={14} hy={48} />],

  ["undoview", 1, <><path d="M50 20C42 10 28 12 21 21L19 17 12 29 27 27 24 24C31 17 40 16 47 24Z" {...k} fill="#444" strokeWidth="1.200" /><Lens x={33} y={36} r={9.500} hx={20} hy={50} /></>],
  ["car", 1, <><path d="M9 40H52" stroke="#aaa" strokeWidth="1.500" /><path d="M11 34C12 29 16 29 21 28L26 21H39L44 28 48 30V36H11Z" fill="#e8222a" stroke="#a50c12" strokeWidth="1.200" /><path d="M24 27 28 23H32V27ZM34 23H38L41 27H34Z" fill="#fbd9d9" /><circle cx="19" cy="35" r="3.600" {...k} fill="#fff" /><circle cx="41" cy="35" r="3.600" {...k} fill="#fff" /></>],
  ["cplane", 1, <><path d="M10 42 22 21M22 46 32 23M34 49 42 25M45 52 52 28M10 42 45 52M14 35 47 44M18 28 50 36M22 21 52 28" {...gl} strokeWidth="1.300" /><path d="M31 35 37 26" stroke="#2c9a2c" strokeWidth="2.500" /><path d="M31 35 48 40" stroke="#d4141c" strokeWidth="2.500" /><H x={31} y={35} /></>],
  ["named", 1, <><circle cx="24" cy="24" r="6.500" fill="#ffe23a" stroke="#b5651d" strokeWidth="1.800" /><rect x="34" y="22" width="12" height="12" fill="#ffe23a" stroke="#b5651d" strokeWidth="1.800" /><path d="M28 36 21 47H35Z" fill="none" stroke="#b5651d" strokeWidth="1.800" /><path d="M46 11H52V17M11 45V52H17" {...k} strokeLinecap="butt" /></>],
  ["bulb", 1, <><path d="M26 40V48L31 51 36 48V40Z" {...k} fill="#eee" /><path d="M31 12A12.500 12.500 0 0 1 43 24C43 31 36 33 36 41H26C26 33 18 31 18 24A12.500 12.500 0 0 1 31 12Z" {...k} fill="url(#greyDark)" /></>],

  ["lock", 1, <><path d="M23 28V21C23 12 38 12 38 21V28" {...k} strokeWidth="3.600" /><path d="M19 27H43V46H19Z" {...k} fill="url(#greyDark)" /><path d="M23 33H39M23 38H39" stroke="#fff" strokeWidth="1.200" /></>],
  ["layers", 1, <><path d="M14 34 30 44 48 34V42L30 50 14 40Z" {...k} fill="#1f45a8" /><path d="M14 26 30 36 48 29V36L30 45 14 35Z" {...k} fill="#fff" strokeWidth="1.200" /><path d="M14 15 48 21V29L30 37 14 27Z" {...k} fill="#ff5a3c" /><path d="M28 31 48 21V29L30 37Z" fill="#d4141c" stroke="#000" strokeWidth="1" /><path d="M14 15 48 21 28 31Z" fill="#ff8b6a" stroke="#000" strokeWidth="1" /></>],
  ["wheel", 1, <><circle cx="31" cy="31" r="18" fill="#000" />{hues.map((h) => { const a = ((h - 90) * Math.PI) / 180; const b = ((h - 79) * Math.PI) / 180; return <path key={h} d={`M${31 + 13 * Math.cos(a)} ${31 + 13 * Math.sin(a)}A13 13 0 0 1 ${31 + 13 * Math.cos(b)} ${31 + 13 * Math.sin(b)}`} stroke={`hsl(${h} 95% 55%)`} strokeWidth="7" fill="none" />; })}<circle cx="31" cy="31" r="9.500" fill="#ececec" /></>],
  ["shade", 0, <Globe />],
  ["shadegrid", 1, <><path d="M10 7V55M18 7V55M26 7V55M34 7V55M42 7V55M50 7V55M7 11H55M7 20H55M7 29H55M7 38H55M7 47H55" {...gl} strokeWidth="1.300" /><Globe /></>],

  ["render", 1, <><ellipse cx="32" cy="45" rx="18" ry="6" fill="#0003" /><circle cx="31" cy="31" r="17.500" fill="url(#render)" stroke="#04134d" strokeWidth="1" /></>],
  ["spot", 1, <><path d="M28 15 52 10 45 34Z" {...k} fill="url(#orange)" /><ellipse cx="36" cy="25" rx="12" ry="4.500" transform="rotate(48 36 25)" {...k} fill="#fff3cf" strokeWidth="1.300" /></>],
  ["dim", 1, <><path d="M10 13H26M10 33H26M29 37V52M49 37V50M14 17V29M12 19 14 16 16 19M12 27 14 30 16 27M33 48H45M35 46 32 48 35 50M43 46 46 48 43 50" {...k} /><H x={29} y={13} /><H x={29} y={33} /><H x={49} y={33} /></>],
];

/* ---------- model preview ---------- */

const single = 0.62;
const dbl = 0.857;
const faces = [
  [dbl, "2257.6,68 2736.6,547 2577,706 2548,619 2523.4,547 2463,726 2417,866 2257.6,1026 1778,547"],
  [single, "1919,209 2596,209 2596,660 2446,734 2370,886 1919,886"],
  [single, "1919,209 2596,209 2596,547 2524,580 2370,886 1919,886"],
  [single, "3214.6,68 2736,547 2895.4,706 3191,806 3165,829.5 3055.6,866 3214.6,1026 3693,547"],
  [single, "3214.6,68 2736,547 2895.4,706 2925,619 2948,547 3009,726 3055.6,866 3214.6,1026 3693,547"],
  [single, "2876,209 3553,209 3553,886 3101.5,886 3212,784 3175,691 3100,548 2876,660"],
  [single, "2876,209 3553,209 3553,886 3101.5,886 2948,580 2876,547"],
  [single, "2257.6,1026 2416.5,1185 2257,1345 2416,1504 2577,1345 2736,1504 2257.6,1982.600 1778,1504"],
  [single, "2257.6,1026 2416.5,1185 2276,1232 2276,1240 2343,1265 2577,1345 2736,1504 2257.6,1982.600 1778,1504"],
  [single, "2145.7,1166 2371.6,1166 2477,1487 2457,1530.600 2145.7,1842 2257.300,1503.700"],
  [single, "2249,1222 2276,1230 2595,1391 2316,1285"],
  [single, "2465,1560 2372.5,1839 2495,1598"],
  [single, "2495,1491 2595,1391 2595,1432 2524,1480"],
  [single, "3214.6,1026 3056.4,1185 3214.5,1238.700 2895.700,1345 2736,1504 3214.6,1982.600 3693,1504"],
  [single, "3214.6,1026 3056.4,1185 3214.5,1238.700 2895.700,1345 2736,1504 3214.6,1982.600 3693,1504"],
  [single, "3103,1166 3553,1166 3553,1842.700 2876,1842.700 2876,1391 3194,1230.500 3160,1220"],
  [single, "3103,1166 3553,1166 3553,1842.700 2876,1842.700 2876,1391 3165,1245 3187,1250"],
];
const lobes = [
  "M2456 573V547A140 140 0 0 1 2736 547V573L2668 547.500V619H2524V547.500Z",
  "M2737 573V547A140 140 0 0 1 3017 547V573L2948 547.500V619H2805V547.500Z",
  "M2456 1478V1505A140 140 0 0 0 2736 1505V1478L2668 1504V1432H2524V1504Z",
  "M2737 1478V1505A140 140 0 0 0 3017 1505V1478L2948 1504V1432H2805V1504Z",
];

const ModelView = () => (
  <Viewport>
    <GridPlane />
    <Model viewBox="1916 130 1924 2214">
      <g fill="#ffd76b">
        {faces.map(([o, pts], i) => <polygon key={i} points={pts} fillOpacity={o} />)}
        {lobes.map((d, i) => <path key={i} d={d} fillOpacity=".96" />)}
      </g>
      <path d="M1988 2212V2272H2048" fill="none" stroke="#66686a" strokeWidth="2" />
      <g fill="#606265" fontFamily="Inter, sans-serif" fontSize="21">
        <text x="1992" y="2213">y</text>
        <text x="2051" y="2273">x</text>
      </g>
    </Model>
    <ViewBadge>Top</ViewBadge>
  </Viewport>
);

const Check = () => (
  <svg width="18" height="18" viewBox="0 0 18 18"><path d="M3 10 7 15 14 3" fill="none" stroke="#fff" strokeWidth="2.600" strokeLinecap="round" /></svg>
);

const snaps = [
  ["End", 11], ["Near"], ["Point"], ["Midpoint"], ["Center"], ["Intersection"], ["Perpendicular"], ["Tangent"],
  ["Quadrant"], ["Knot"], ["Vertex"], ["On curve", 0, "off"], ["On surface", 0, "off"], ["On polysurface", 0, "off"],
  ["On mesh", 0, "off"], ["Project"], ["SmartTrack", 0, "on"], ["Disable all", 36],
];

const tabs = [["Maths", 88], ["Sets", 71], ["Vector", 90], ["Curve", 86], ["Surface", 105], ["Mesh", 82], ["Intersect", 114], ["Transform", 128], ["Display", 100]];

export default function App() {
  return (
    <Screen>
      <Global />
      <Defs />
      <ScriptWindow>
        <TabRow>
          <Tab $w={105} $active>Params</Tab>
          {tabs.map(([t, w]) => <Tab key={t} $w={w}>{t}</Tab>)}
        </TabRow>
        <Ribbon>
          <RibbonGroup w={421} label="Geometry" icons={geometryIcons} />
          <RibbonGroup w={232} label="Primitive" icons={primitiveIcons} />
          <RibbonGroup w={440} label="Input" icons={inputIcons} />
          <RibbonGroup w={385} label="Util" icons={utilIcons} />
        </Ribbon>
        <ToolRow>
          <ToolButton><svg viewBox="0 0 34 34"><path d="M8 3H18L22 7V18H8Z" fill="#e9e9e9" stroke="#888" strokeWidth="1.300" /><path d="M5 15H13L16 12H29V32H5Z" fill="#6cc04a" stroke="#2f7a1c" strokeWidth="1.300" /></svg></ToolButton>
          <ToolButton><svg viewBox="0 0 34 34"><path d="M2 2H32V32H5L2 29Z" fill="#1c6bea" stroke="#0a3f9e" strokeWidth="1.300" /><rect x="8" y="3" width="18" height="13" fill="#e8eef5" /><rect x="9" y="21" width="16" height="11" fill="#c9ced6" /><rect x="12" y="22" width="5" height="9" fill="#17439b" /></svg></ToolButton>
          <ToolSep $r={4} />
          <Zoom><span>100%</span><svg viewBox="0 0 18 14"><path d="M2 2 9 11 16 2" fill="none" stroke="#222" strokeWidth="2.400" /></svg></Zoom>
          <ToolButton><svg viewBox="0 0 34 34"><path d="M4 11V4H12M22 4H30V11M30 23V30H22M12 30H4V23" fill="none" stroke="#111" strokeWidth="4.500" /><path d="M13 13 21 21M21 13 13 21" stroke="#111" strokeWidth="3.500" /></svg></ToolButton>
          <ToolButton><svg viewBox="0 0 34 34"><path d="M3 18C9 9 25 9 31 18C25 28 9 28 3 18Z" fill="#e9f5fb" stroke="#555" strokeWidth="1.500" /><circle cx="17" cy="18" r="7.500" fill="#3aa3d8" stroke="#1b5d8a" strokeWidth="1.300" /><circle cx="17" cy="18" r="3.400" fill="#0b2238" /></svg></ToolButton>
          <ToolButton><svg viewBox="0 0 34 34"><path d="M3 14C11 12 3 26 8 31S16 29 18 27" fill="none" stroke="#5a2a22" strokeWidth="2.400" /><path d="M29 4C32 14 27 24 20 27L14 22C17 15 23 9 29 4Z" fill="#e23a3a" stroke="#a01c1c" strokeWidth="1" /><path d="M14 21 20 27 13 29Z" fill="#f0c040" stroke="#6a4a10" strokeWidth="1" /></svg></ToolButton>
          <Spacer />
          <ToolButton><svg viewBox="0 0 34 34"><path d="M7 12C8 6 12 2 17 2S26 6 27 12L23 21H11Z" fill="url(#ball)" stroke="#aaa" strokeWidth="1.300" /><ellipse cx="17" cy="24" rx="11" ry="7" fill="#333" stroke="#111" /></svg></ToolButton>
          <ToolButton><svg viewBox="0 0 34 34"><path d="M20 2 31 10 29 20 15 32 4 25 6 14Z" fill="#f6f6f6" stroke="#888" strokeWidth="2.200" strokeLinejoin="round" /><path d="M8 22C14 22 22 14 26 8M12 28C18 26 24 20 27 15M8 15 14 10" fill="none" stroke="#aaa" strokeWidth="2.800" /></svg></ToolButton>
          <ToolButton $on><svg viewBox="0 0 34 34"><path d="M20 2 31 10 29 20 15 32 4 25 6 14Z" fill="#c4181c" stroke="#6d0609" strokeWidth="1.500" strokeLinejoin="round" /><ellipse cx="22" cy="9" rx="7" ry="4" fill="#8a0a0e" /><path d="M9 15 7 23 12 26" fill="none" stroke="#f08080" strokeWidth="2" /></svg></ToolButton>
          <ToolSep $r={10} />
          <ToolButton><svg viewBox="0 0 34 34"><path d="M6 12 16 24 24 31 15 32 4 24Z" fill="#ececec" stroke="#888" strokeWidth="1.300" /><path d="M12 4 24 2 31 10 29 21 24 25Z" fill="#4f9f2a" stroke="#255c10" strokeWidth="1.300" /><ellipse cx="22" cy="10" rx="5" ry="4" fill="#a8dc84" /><path d="M3 6 30 31" stroke="#222" strokeWidth="1.500" /></svg></ToolButton>
          <ToolButton><svg viewBox="0 0 34 34"><circle cx="17" cy="16" r="13.500" fill="url(#ball)" stroke="#777" strokeWidth="1.300" /><path d="M17 2.500A13.500 13.500 0 0 0 17 29.500Z" fill="#e88a2c" stroke="#a4540e" strokeWidth="1" /></svg></ToolButton>
          <ToolSep $r={10} />
          <ToolButton $last><svg viewBox="0 0 34 34"><path d="M17 6 25 9 29 18 25 27 17 30 9 27 6 18 9 9Z" fill="url(#sky)" stroke="#2a3f80" strokeWidth="1.500" /></svg></ToolButton>
        </ToolRow>
        <Canvas>
          <Cluster $x={1452} $y={1196} $w={160} $h={600} />
          <Cluster $x={-10} $y={2082} $w={1073} $h={320} />
          <CanvasWires />
          <Component x={-70} y={684} w={249} h={90} inW={107} ins={["Base", "Direction"]} name="Extrude" outs={["Extrusion"]} />
          <Component x={382} y={553} w={206} h={165} inW={86.5} ins={["Meshes A", "Meshes B"]} name="Mesh Difference" outs={["Result"]} />
          <Component x={328} y={776} w={192} h={162} inW={73} ins={["Breps A", "Breps B"]} name="Solid Difference" outs={["Result"]} />
          <Param x={686} y={842} w={102} h={41} name="Geometry" />
          <Param x={1488} y={1226} w={100} h={42} name="final" />
          <Component x={196} y={2126} w={156} h={170} inW={37} ins={["D1", "D2", "D3", "D4"]} name="Merge" outs={["Result"]} />
          <Component x={438} y={2186} w={220} h={90} inW={79} ins={["Base", "Direction"]} name="Extrude" outs={["Extrusion"]} />
          <Component x={732} y={2174} w={156} h={114} inW={49} ins={["Brep"]} name="Cap Holes" outs={["Brep"]} dark />
          <Param x={940} y={2210} w={102} h={42} name="base" />
          <Component x={438} y={2294} w={234} h={130} inW={111} ins={["X component", "Y component", "Z component"]} name="Vector XYZ" outs={["Vector"]} dark />
          <SpiralTail />
          <SpiralBox>
            <RibbonIcon viewBox="0 0 48 48"><path d="M1 24 11 3H37L47 24 37 45H11Z" fill="#4a4a4a" stroke="#111" strokeWidth="2" /><path d="M24 25c3-1 3-6-1-6s-8 4-7 8 6 7 11 5 8-8 6-14-8-7-13-6" fill="none" stroke="#ddd" strokeWidth="2.600" /></RibbonIcon>
          </SpiralBox>
          <SliderFrame>
            <SliderWell><SliderPlot /><SliderValue /></SliderWell>
            <SliderMark />
          </SliderFrame>
          <Compass viewBox="0 0 120 110">
            <path d="M37 24A45 45 0 0 1 54 13L62 18 52 26 42 32ZM84 13A45 45 0 0 1 97 22L90 28 80 20ZM96 88A45 45 0 0 0 104 78L112 88 104 92Z" fill="#111" stroke="#111" strokeWidth="3" strokeLinejoin="round" />
            <circle cx="70" cy="56" r="42" fill="#f6f6f4" stroke="#555" strokeWidth="3" />
            <circle cx="70" cy="56" r="35" fill="url(#ball)" stroke="#666" strokeWidth="2" />
            <path d="M9 47 22 38 27 47 22 56Z" fill="#111" />
          </Compass>
        </Canvas>
      </ScriptWindow>

      <Divider><DividerGrip /></Divider>

      <ModelWindow>
        <TitleBar>
          <PanelToggle $c="#1a84ff" $side="left" />
          <Modes>
            <Mode $w={163}>Grid Snap</Mode>
            <Mode $w={117}>Ortho</Mode>
            <Mode $w={118}>Planar</Mode>
            <Mode $w={184} $on>SmartTrack</Mode>
            <Mode $w={140}>Gumball</Mode>
            <Mode $w={132} $on>History</Mode>
          </Modes>
          <Spacer />
          <SnapIcons viewBox="0 0 110 50">
            <circle cx="20.500" cy="24.500" r="17" fill="none" stroke="#666" strokeWidth="2" />
            <path d="M20 25H43" stroke="#000" strokeWidth="2" />
            <rect x="17" y="21" width="7" height="7" fill="#fff" stroke="#000" strokeWidth="2" />
            <circle cx="85" cy="25" r="19.500" fill="none" stroke="#000" strokeWidth="2.200" />
            <circle cx="85" cy="25" r="10" fill="none" stroke="#000" strokeWidth="2.200" />
          </SnapIcons>
          <LayerSelect><Swatch /><span>Default</span></LayerSelect>
          <PanelToggle $c="#454545" $side="right" />
        </TitleBar>
        <Body>
          <Sidebar>
            <SideHead />
            <CommandInput>Command</CommandInput>
            <Palette>
              {palette.map(([name, menu, art]) => (
                <PaletteCell key={name} $menu={menu}><svg viewBox="0 0 60 60">{art}</svg></PaletteCell>
              ))}
            </Palette>
            <Snaps>
              <SnapRow><Mark $radio $on><Dot /></Mark><SnapName>Persistent</SnapName></SnapRow>
              <SnapRow><Mark $radio /><SnapName>One shot</SnapName></SnapRow>
              {snaps.map(([t, gap, st]) => (
                <SnapRow key={t} $gap={gap} $off={st === "off"}>
                  <Mark $on={st === "on"} $off={st === "off"}>{st === "on" && <Check />}</Mark>
                  <SnapName>{t}</SnapName>
                </SnapRow>
              ))}
            </Snaps>
          </Sidebar>
          <Main>
            <ViewTabs>
              <ViewIcon viewBox="0 0 42 36"><path d="M10 2H2V34H40V2M30 2H21V34M2 18H40" fill="none" stroke="#444" strokeWidth="2" /><path d="M2 20H10M21 20H30" stroke="#444" strokeWidth="3" /></ViewIcon>
              <ViewIcon viewBox="0 0 42 36"><path d="M10 2H2V34H40V2" fill="none" stroke="#1a84ff" strokeWidth="2" /></ViewIcon>
              <ViewTab $w={222}>Perspective</ViewTab>
              <ViewTab $w={123} $on>Top</ViewTab>
              <ViewTab $w={142}>Front</ViewTab>
              <ViewTab $w={142}>Right</ViewTab>
              <Layouts>Layouts...</Layouts>
            </ViewTabs>
            <ModelView />
          </Main>
        </Body>
        <StatusBar>
          <Lines viewBox="0 0 28 20"><path d="M0 1H28M0 7H28M0 13H28M0 19H28" stroke="#6a6a6a" strokeWidth="2" /></Lines>
          <StatusItem $w={1183}>Command: '_Cut</StatusItem>
          <StatusItem $w={147}>Millimeters</StatusItem>
          <PlaneSelect>CPlane<svg viewBox="0 0 14 22"><path d="M2 8 7 2 12 8M2 14 7 20 12 14" fill="none" stroke="#8a8a8a" strokeWidth="2" /></svg></PlaneSelect>
          <StatusItem $w={162}>X: -7.227</StatusItem>
          <StatusItem $w={171}>Y: -84.528</StatusItem>
          <StatusItem $w={120}>Z: 0.000</StatusItem>
        </StatusBar>
      </ModelWindow>

      <Tooltip>
        <TipHead>
          <svg viewBox="0 0 44 44">
            <rect x="2" y="2" width="28" height="28" rx="3" fill="#e8701a" stroke="#7a1408" strokeWidth="2.500" />
            <path d="M11 3V29M20 3V29M3 11H29M3 20H29" stroke="#9c3a08" strokeWidth="1.200" opacity=".7" />
            <rect x="19" y="18" width="23" height="23" rx="3" fill="#cfcfcf" stroke="#444" strokeWidth="2.500" />
            <path d="M20 19H30V30H20Z" fill="#a9a9a9" />
          </svg>
          Mesh Difference
        </TipHead>
        <TipBody>Perform a solid difference on two sets of meshes</TipBody>
      </Tooltip>
    </Screen>
  );
}
